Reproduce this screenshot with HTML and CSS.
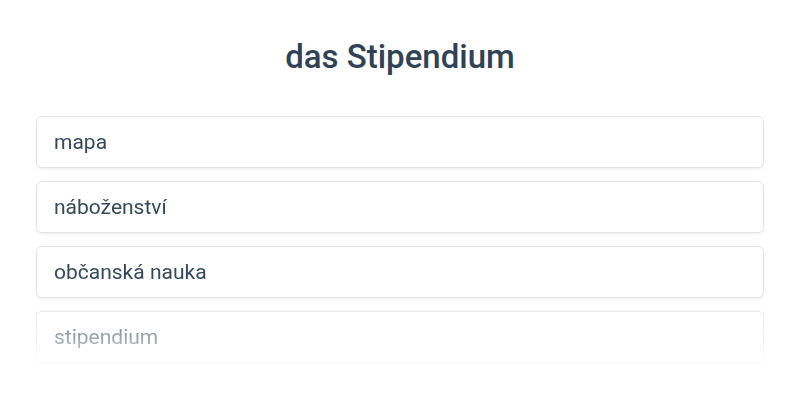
FILE: index.html
```html
<!DOCTYPE html>
<html lang="cs">
<head>
<meta charset="utf-8">
<link rel="stylesheet" href="styles.css">
</head>
<body>
<main class="page">
  <h1 class="title">das Stipendium</h1>
  <div class="list">
    <div class="card">mapa</div>
    <div class="card">náboženství</div>
    <div class="card">občanská nauka</div>
    <div class="card">stipendium</div>
  </div>
</main>
</body>
</html>
```
FILE: styles.css
```css
html, body {
  margin: 0;
  padding: 0;
  background: #ffffff;
}
.page {
  width: 800px;
  height: 400px;
  overflow: hidden;
  font-family: Roboto, "Noto Sans", sans-serif;
  color: #34495e;
}
.title {
  margin: 0;
  padding-top: 37px;
  height: 40px;
  line-height: 40px;
  text-align: center;
  font-size: 33px;
  font-weight: 500;
  color: #2f4256;
}
.list {
  margin: 39px 36px 0 36px;
  display: flex;
  flex-direction: column;
  gap: 13px;
  height: 254px;
  overflow: hidden;
  -webkit-mask-image: linear-gradient(to bottom, #000 0, #000 185px, rgba(0,0,0,0.5) 221px, rgba(0,0,0,0.15) 248px, transparent 254px);
  mask-image: linear-gradient(to bottom, #000 0, #000 185px, rgba(0,0,0,0.5) 221px, rgba(0,0,0,0.15) 248px, transparent 254px);
}
.card {
  flex: none;
  box-sizing: border-box;
  height: 52px;
  border: 1px solid #e3e3e3;
  border-radius: 6px;
  box-shadow: 0 1px 3px rgba(0,0,0,0.08);
  padding: 0 17px;
  display: flex;
  align-items: center;
  font-size: 21px;
  background: #fff;
}
```
